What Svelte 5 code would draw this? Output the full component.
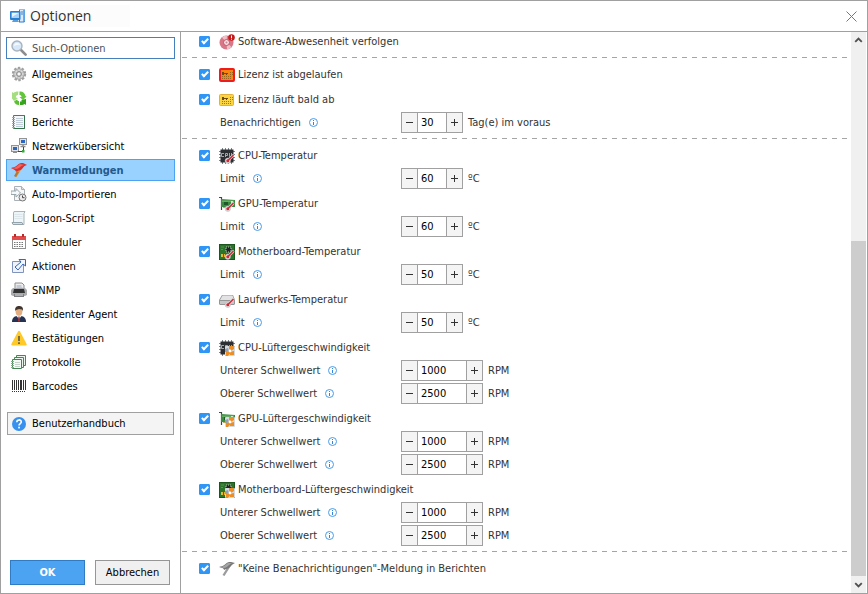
<script lang="ts">
  interface MenuItem {
    icon: string;
    label: string;
  }

  interface Field {
    label: string;
    value: number;
    step: number;
    unit: string;
  }

  interface Alert {
    icon: string;
    label: string;
    enabled: boolean;
    fields: Field[];
  }

  const menu: MenuItem[] = [
    { icon: 'gear', label: 'Allgemeines' },
    { icon: 'scanner', label: 'Scanner' },
    { icon: 'report', label: 'Berichte' },
    { icon: 'network', label: 'Netzwerkübersicht' },
    { icon: 'flag', label: 'Warnmeldungen' },
    { icon: 'import', label: 'Auto-Importieren' },
    { icon: 'script', label: 'Logon-Script' },
    { icon: 'calendar', label: 'Scheduler' },
    { icon: 'action', label: 'Aktionen' },
    { icon: 'printer', label: 'SNMP' },
    { icon: 'agent', label: 'Residenter Agent' },
    { icon: 'warning', label: 'Bestätigungen' },
    { icon: 'logs', label: 'Protokolle' },
    { icon: 'barcode', label: 'Barcodes' }
  ];

  function limit(value: number): Field[] {
    return [{ label: 'Limit', value, step: 1, unit: 'ºC' }];
  }

  function fanRange(): Field[] {
    return [
      { label: 'Unterer Schwellwert', value: 1000, step: 100, unit: 'RPM' },
      { label: 'Oberer Schwellwert', value: 2500, step: 100, unit: 'RPM' }
    ];
  }

  let selected = $state('Warnmeldungen');
  let search = $state('');

  let sections: Alert[][] = $state([
    [{ icon: 'disc', label: 'Software-Abwesenheit verfolgen', enabled: true, fields: [] }],
    [
      { icon: 'license-red', label: 'Lizenz ist abgelaufen', enabled: true, fields: [] },
      {
        icon: 'license-yellow',
        label: 'Lizenz läuft bald ab',
        enabled: true,
        fields: [{ label: 'Benachrichtigen', value: 30, step: 1, unit: 'Tag(e) im voraus' }]
      }
    ],
    [
      { icon: 'cpu-temp', label: 'CPU-Temperatur', enabled: true, fields: limit(60) },
      { icon: 'gpu-temp', label: 'GPU-Temperatur', enabled: true, fields: limit(60) },
      { icon: 'board-temp', label: 'Motherboard-Temperatur', enabled: true, fields: limit(50) },
      { icon: 'drive-temp', label: 'Laufwerks-Temperatur', enabled: true, fields: limit(50) },
      { icon: 'cpu-fan', label: 'CPU-Lüftergeschwindigkeit', enabled: true, fields: fanRange() },
      { icon: 'gpu-fan', label: 'GPU-Lüftergeschwindigkeit', enabled: true, fields: fanRange() },
      { icon: 'board-fan', label: 'Motherboard-Lüftergeschwindigkeit', enabled: true, fields: fanRange() }
    ],
    [{ icon: 'flag-gray', label: '"Keine Benachrichtigungen"-Meldung in Berichten', enabled: true, fields: [] }]
  ]);

  function change(field: Field, direction: number) {
    field.value = Math.max(0, field.value + direction * field.step);
  }
</script>

{#snippet icon(name: string)}
  <svg class="icon" viewBox="0 0 16 16" aria-hidden="true">
    {#if name === 'app'}
      <path d="M9 1.500h6v12l-1 1H9z" fill="#2a7fd0" />
      <path d="M10 2h3.500v11.500H10z" fill="#dceaf7" />
      <path d="M13.500 2H15v11l-1.500.5z" fill="#5ba4e6" />
      <path d="M11 4h2M11 6h2" stroke="#3f7fbd" />
      <rect x="0" y="3" width="10.500" height="9" rx="1" fill="#2880d4" />
      <rect x="1.500" y="4.500" width="7.500" height="5.500" fill="#a9d2f7" />
      <path d="M2 5h6.500L2 9z" fill="#eaf5ff" />
      <path d="M3 12h5l1 2H2z" fill="#5a9fdd" />
    {:else if name === 'search'}
      <path d="M10 10l4.600 4.600" stroke="#8d8d8d" stroke-width="2.600" stroke-linecap="round" />
      <circle cx="6" cy="6" r="5" fill="#d6e7fa" stroke="#aab3bd" stroke-width="1.400" />
      <path d="M3 6a3 3 0 013-3c2 0 3 1 3.500 2C7 4.500 5 5 3 6z" fill="#f7fbff" />
    {:else if name === 'gear'}
      <circle cx="8" cy="8" r="6.200" fill="none" stroke="#a0a0a0" stroke-width="2" stroke-dasharray="2.400 1.500" />
      <circle cx="8" cy="8" r="5.300" fill="#c4c4c4" stroke="#989898" stroke-width=".8" />
      <path d="M8 3.500v9M3.500 8h9M4.800 4.800l6.400 6.400M11.200 4.800l-6.400 6.400" stroke="#dcdcdc" stroke-width="1.300" />
      <circle cx="8" cy="8" r="2.400" fill="#dedede" stroke="#858585" />
      <circle cx="8" cy="8" r="1" fill="#fff" />
    {:else if name === 'scanner'}
      <path d="M1 2l1.500 1C4 1.800 5.500 1.300 7.500 1.500L7 5C5.500 5 4.800 6 4.800 7.500L7 8 3 11 1 8.500z" fill="#a4de80" />
      <path d="M3 11.500L6 9.500c.5 1 1 1.500 2 1.500v4c-2.500 0-4-1-5-3.500z" fill="#5cc036" />
      <path d="M8.500 1.500c3-.5 5.500 1.500 6 4.500l1 .5L12 10 8.500 7h2c0-1.500-1-2-2-2z" fill="#62c53c" />
      <path d="M15 9v6l-1.500-1c-1.200 1-2.500 1.200-4.500 1v-3.500c.8 0 1.500 0 2-.5l-1-1z" fill="#36a41c" />
    {:else if name === 'report'}
      <path d="M2.500 1.500h11v13h-11z" fill="#f4f8fb" stroke="#4c7b58" />
      <path d="M13.500 1.500v13h-10" fill="none" stroke="#34734a" />
      <path d="M5 4.500h7M5 6.500h7M5 8.500h7M5 10.500h7M5 12.500h7" stroke="#c1cdd9" />
      <path d="M1 3.500h3M1 5.500h3M1 7.500h3M1 9.500h3M1 11.500h3M1 13.500h3" stroke="#9aabb9" />
    {:else if name === 'network'}
      <rect x="8.500" y=".5" width="7" height="6" fill="#e4e4e4" stroke="#949494" />
      <rect x="10" y="2" width="4" height="3" fill="#2b67c4" />
      <path d="M12 7v1.500M9.500 8.500h5" stroke="#8e8e8e" stroke-width="1.400" />
      <rect x=".5" y="7.500" width="7" height="6" fill="#e4e4e4" stroke="#949494" />
      <rect x="2" y="9" width="4" height="3" fill="#2b67c4" />
      <path d="M2 14.500h4" stroke="#8e8e8e" />
      <path d="M7 13.500h5.500V9" fill="none" stroke="#444" />
      <rect x="11" y="12" width="2.500" height="2.500" fill="#38a83b" />
    {:else if name === 'flag'}
      <path d="M11 2l2 1-7.500 12-2-1z" fill="#d09a4e" />
      <path d="M0 6c2-1 4-.5 6-2.500S9 1 12 1l4 2c-2 .5-3 1-5 4-1.500 2-4 1-6 3 0-2-3-3-5-4z" fill="#dc2f2f" />
      <path d="M1 6c4 0 5-2 8-4l4 1C9 4 8 7 5 7z" fill="#ee6660" />
      <path d="M6 9l2 1-3 5-2-1z" fill="#b8782e" />
    {:else if name === 'flag-gray'}
      <path d="M11 2l2 1-7.500 12-2-1z" fill="#9b9b9b" />
      <path d="M0 6c2-1 4-.5 6-2.500S9 1 12 1l4 1c-2 1-3 1.500-5 4-1.500 2-4 1.500-6 3 0-2-3-2.500-5-3z" fill="#777" />
      <path d="M1 6c4 0 5-2 8-4l4 0C9 4 8 7 5 7z" fill="#a5a5a5" />
    {:else if name === 'import'}
      <path d="M3.500.5h7l3 3v11h-10z" fill="#f7f7f7" stroke="#a9b0b6" />
      <path d="M10.500.5v3h3" fill="#ddd" stroke="#a9b0b6" />
      <path d="M0 5h5V2.500L9.500 7 5 11V8.500H0z" fill="#f6f9fa" stroke="#98a6ad" />
      <circle cx="11.500" cy="11.500" r="3.500" fill="#ececec" stroke="#777" />
      <path d="M11.500 9.500v2.200h2" fill="none" stroke="#444" />
    {:else if name === 'script'}
      <path d="M3 1.500h11l-1 2v11H2.500V3z" fill="#eef5f8" stroke="#a6b4bb" />
      <path d="M3.500 4.500h8M3.500 6.500h8M3.500 8.500h8" stroke="#dce6eb" />
      <path d="M1 12.500h10l1 2H2z" fill="#d4e1e7" stroke="#94a3ab" />
    {:else if name === 'calendar'}
      <rect x="1.500" y="2.500" width="13" height="12" fill="#fff" stroke="#909090" />
      <path d="M1 2h14v4H1z" fill="#e14b4b" />
      <path d="M4 0v3M12 0v3" stroke="#b82c2c" stroke-width="2" />
      <path d="M3 8.500h10M3 10.500h10M3 12.500h10" stroke="#777" stroke-dasharray="1.500 1" />
    {:else if name === 'action'}
      <path d="M1.500 3.500h11v11h-11z" fill="#eef3fb" stroke="#7f93bd" />
      <path d="M8 1.500h6.500V8L12 6l-5 6-3-3 6-5z" fill="#f2f7ff" stroke="#3866bd" stroke-linejoin="round" />
    {:else if name === 'printer'}
      <path d="M4 1h7l2 2v5H4z" fill="#eee" stroke="#8c8c8c" />
      <path d="M5.500 4h5M5.500 6h6" stroke="#96a8bb" />
      <path d="M0 8l2-2h12l2 2v5l-2 1H2l-2-1z" fill="#a9abae" />
      <path d="M3 7h10l1 4H2z" fill="#333" />
      <path d="M3 12h10v3H3z" fill="#7e8083" />
      <path d="M4 13h8" stroke="#ddd" />
    {:else if name === 'agent'}
      <path d="M1 16c0-4 2-5.500 5-6h4c3 .5 5 2 5 6z" fill="#263252" />
      <path d="M5.500 10L8 13l2.500-3-1-2h-3z" fill="#f4f4f4" />
      <path d="M7.400 10.500h1.200L9 15l-1 1-1-1z" fill="#a13434" />
      <ellipse cx="8" cy="5.500" rx="3.400" ry="4.200" fill="#e2ad80" />
      <path d="M4.300 5C3.500 1 6 0 8 0s5 1 3.700 5L11 3.500 8 3 5 4z" fill="#40342b" />
    {:else if name === 'warning'}
      <path d="M7 1.500q1-1.500 2 0L15.600 14q.5 1.500-.8 1.500H1.200Q-.1 15.500.4 14z" fill="#ffc928" />
      <path d="M7.200 6h1.600v5H7.200zM7.200 12.200h1.600V14H7.200z" fill="#59564b" />
    {:else if name === 'logs'}
      <path d="M5.500 1.500h9v10h-9z" fill="#edf5ef" stroke="#458553" />
      <path d="M3.500 3.500h9v10h-9z" fill="#edf5ef" stroke="#458553" />
      <path d="M1.500 5.500h9v9h-9z" fill="#f5faf6" stroke="#458553" />
      <path d="M4 8.500h5M4 10.500h5M4 12.500h5" stroke="#c4d2ca" />
      <path d="M0 7.500h3M0 9.500h3M0 11.500h3M0 13.500h3" stroke="#91a99b" />
    {:else if name === 'barcode'}
      <path d="M1.500 2v10M3.500 2v10M5.500 2v10M7.500 2v10M12.500 2v10M14.500 2v10" stroke="#333" />
      <path d="M10 2v10" stroke="#333" stroke-width="2" />
      <path d="M1 13.500h14" stroke="#333" stroke-dasharray="1 1" />
    {:else if name === 'help'}
      <circle cx="8" cy="8" r="7" fill="#3790ee" />
      <path d="M5.800 6.200c0-3 4.500-3 4.500-.2C10.300 7.500 8 7.600 8 9.500" fill="none" stroke="#fff" stroke-width="1.600" />
      <rect x="7.200" y="10.700" width="1.700" height="1.700" fill="#fff" />
    {:else if name === 'disc'}
      <circle cx="7.500" cy="8.500" r="7" fill="#d77787" />
      <path d="M7.500 8.500L3 3.500A7 7 0 018 1.500zM7.500 8.500l5 4.500a7 7 0 01-4.500 2.500z" fill="#f0c0c7" />
      <circle cx="7.500" cy="8.500" r="3" fill="#f6dfe2" stroke="#c45366" />
      <circle cx="7.500" cy="8.500" r="1" fill="#c98791" />
      <circle cx="12.500" cy="3.500" r="3.300" fill="#c61a1a" />
      <path d="M12.500 1.500v2.500M12.500 4.700v1" stroke="#fff" />
    {:else if name === 'license-red' || name === 'license-yellow'}
      {@const red = name === 'license-red'}
      <rect x={red ? 1 : 0.5} y={red ? 2 : 2.5} width="14" height={red ? 12 : 11} rx="1" fill={red ? '#f9850f' : '#fbd541'} stroke={red ? '#ee1c1c' : '#e3b13a'} stroke-width={red ? 2 : 1} />
      <path d="M3 5h2v1h4v1H8v1H7V7H5v1H3z" fill="#6b4a16" />
      <path d="M11 5.500h3M11 7.500h3M3 9.500h10M3 11.500h10" stroke="#84601e" stroke-width=".8" stroke-dasharray="1 1" />
    {:else if name === 'drive-temp'}
      <path d="M3 3h11l2 5v4l-1 1H1l-1-1V8z" fill="#969696" />
      <path d="M3.500 3.500h10L15 8H1z" fill="#e3e3e3" />
      <path d="M1 9h14v3H1z" fill="#c6c6c6" />
    {:else if name.startsWith('cpu')}
      <path d="M3.500 0v16M6.500 0v16M9.500 0v16M12.500 0v16M0 3.500h16M0 6.500h16M0 9.500h16M0 12.500h16" stroke="#7c848c" />
      <rect x="1.500" y="1.500" width="13" height="13" fill="#2d3033" />
      <path d="M5 5.500H2.500v3H5M6.500 9V5.500h2v2h-2M10.500 5v3.500h2V5" fill="none" stroke="#c5c5c5" stroke-width=".8" />
    {:else if name.startsWith('gpu')}
      <path d="M0 1.500h2.500V14" fill="none" stroke="#3d4a3f" stroke-width="1.200" />
      <path d="M2 3l14 1v7H2z" fill="#3a8c40" />
      <path d="M3 4.500h12v1.500H3z" fill="#66ae65" />
      <path d="M4 11.500h7" stroke="#c9a94a" />
      <rect x="5" y="6" width="4" height="3" fill="#1e5729" />
      <path d="M12 5h2v3h-2z" fill="#d9e5d3" />
    {:else if name.startsWith('board')}
      <rect x=".5" y=".5" width="15" height="15" fill="#2a752b" stroke="#1b561d" />
      <rect x="7" y="3" width="5" height="5" fill="#1d2621" stroke="#bfc8ba" stroke-dasharray="1 1" />
      <path d="M2 10h2v3H2zM5 10h1v3H5z" fill="#e3ba32" />
      <path d="M2 3h3M2 5.500h2" stroke="#57954d" />
    {/if}
    {#if name.endsWith('-temp')}
      <path d="M14 7.500L9.500 12" stroke="#d8d8d8" stroke-width="2.600" stroke-linecap="round" />
      <circle cx="8.800" cy="12.800" r="2.700" fill="#e2e2e2" stroke="#b0b0b0" stroke-width=".5" />
      <path d="M14.500 7L9 12.500" stroke="#d62533" stroke-width="1.400" />
      <circle cx="8.800" cy="12.800" r="1.500" fill="#d62533" />
    {:else if name.endsWith('-fan')}
      <rect x="6" y="6" width="10" height="10" rx="1" fill="#d5dade" />
      <path d="M10 6h5v3l-3 2-2-2zM15 11v4h-4l-1-3zM7 12l3-1 1 2-2 3H7z" fill="#ee8d22" />
      <path d="M6 9l3-1 1 3-2 1H6z" fill="#93a2b2" />
      <circle cx="11" cy="11" r="1.400" fill="#fff" />
    {/if}
  </svg>
{/snippet}

<div class="window">
  <header class="titlebar">
    {@render icon('app')}
    <h1>Optionen</h1>
    <button class="close" aria-label="Schließen">
      <svg viewBox="0 0 11 11" aria-hidden="true"><path d="M.5.5l10 10M10.500.5l-10 10" stroke="#777" fill="none" /></svg>
    </button>
  </header>

  <div class="body">
    <aside class="sidebar">
      <label class="search">
        {@render icon('search')}
        <input type="text" placeholder="Such-Optionen" aria-label="Such-Optionen" bind:value={search} />
      </label>

      <nav class="menu">
        {#each menu as item (item.label)}
          <button class="menu-item" class:selected={selected === item.label} onclick={() => (selected = item.label)}>
            {@render icon(item.icon)}
            <span class="caption">{item.label}</span>
          </button>
        {/each}
      </nav>

      <button class="manual">
        {@render icon('help')}
        <span class="caption">Benutzerhandbuch</span>
      </button>

      <div class="actions">
        <button class="action primary">OK</button>
        <button class="action">Abbrechen</button>
      </div>
    </aside>

    <main class="content">
      {#each sections as section, s}
        <section>
          {#each section as alert, a}
            <div class="alert">
              <label class="alert-head">
                <input type="checkbox" bind:checked={alert.enabled} />
                {@render icon(alert.icon)}
                <span class="caption">{alert.label}</span>
              </label>
              {#each alert.fields as field, f}
                <div class="field">
                  <div class="field-label">
                    <label for="field-{s}-{a}-{f}">{field.label}</label>
                    <svg class="info" viewBox="0 0 9 9" aria-hidden="true">
                      <circle cx="4.500" cy="4.500" r="4" fill="#fff" stroke="#4a9be8" />
                      <path d="M4.500 2v1M4.500 4v3" stroke="#2f86dc" />
                    </svg>
                  </div>
                  <div class="spinner" class:wide={field.unit === 'RPM'}>
                    <button aria-label="Verringern" onclick={() => change(field, -1)}>
                      <svg viewBox="0 0 7 7" aria-hidden="true"><path d="M0 3.500h7" stroke="#333" /></svg>
                    </button>
                    <input id="field-{s}-{a}-{f}" type="text" inputmode="numeric" bind:value={field.value} />
                    <button aria-label="Erhöhen" onclick={() => change(field, 1)}>
                      <svg viewBox="0 0 7 7" aria-hidden="true"><path d="M0 3.500h7M3.500 0v7" stroke="#333" /></svg>
                    </button>
                  </div>
                  <span>{field.unit}</span>
                </div>
              {/each}
            </div>
          {/each}
        </section>
      {/each}
    </main>

    <div class="scrollbar" aria-hidden="true">
      <svg viewBox="0 0 16 16"><path d="M4.500 9.500L8 6l3.500 3.500" fill="none" stroke="#505050" stroke-width="2" /></svg>
      <div class="track">
        <div class="thumb"></div>
      </div>
      <svg viewBox="0 0 16 16"><path d="M4.500 6.500L8 10l3.500-3.500" fill="none" stroke="#505050" stroke-width="2" /></svg>
    </div>
  </div>
</div>

<style>
  :global(body) {
    margin: 0;
  }

  .window {
    display: flex;
    flex-direction: column;
    height: 100vh;
    box-sizing: border-box;
    border: 1px solid #a0a0a0;
    background: #fff;
    color: #333;
    font-family: Tahoma, 'DejaVu Sans Condensed', 'Noto Sans', sans-serif;
    font-size: 11px;
    line-height: 16px;
  }

  button,
  input {
    box-sizing: border-box;
    margin: 0;
    padding: 0;
    border: none;
    border-radius: 0;
    background: none;
    color: inherit;
    font: inherit;
  }

  .icon {
    flex: none;
    width: 16px;
    height: 16px;
  }

  .caption {
    padding-top: 1px;
  }

  .titlebar {
    display: flex;
    align-items: center;
    height: 30px;
    padding: 0 10px 0 9px;
    border-bottom: 1px solid #a0a0a0;
  }

  .titlebar h1 {
    width: 100px;
    margin: 0 auto 0 4px;
    background: #fcfcfc;
    font-family: Tahoma, 'Open Sans', sans-serif;
    font-size: 14px;
    font-weight: 400;
    line-height: 22px;
  }

  .close svg {
    display: block;
    width: 11px;
    height: 11px;
  }

  .body {
    display: flex;
    flex: 1;
    min-height: 0;
  }

  .sidebar {
    display: flex;
    flex-direction: column;
    width: 180px;
    padding: 5px 5px 8px;
    box-sizing: border-box;
    border-right: 1px solid #a0a0a0;
    color: #000;
  }

  .search {
    display: flex;
    align-items: center;
    gap: 5px;
    height: 22px;
    margin-bottom: 4px;
    padding: 0 4px;
    box-sizing: border-box;
    border: 1px solid #4580bd;
  }

  .search input {
    flex: 1;
    min-width: 0;
    padding-top: 1px;
    outline: none;
  }

  .search input::placeholder {
    color: #4a5160;
    opacity: 1;
  }

  .menu {
    display: flex;
    flex-direction: column;
    gap: 2px;
  }

  .menu-item {
    display: flex;
    align-items: center;
    gap: 5px;
    height: 22px;
    padding: 0 4px;
    border: 1px solid transparent;
    text-align: left;
  }

  .menu-item.selected {
    border-color: #4ba3f2;
    background: #99d1ff;
    color: #235a8c;
    font-weight: 700;
  }

  .manual {
    display: flex;
    align-items: center;
    gap: 5px;
    height: 23px;
    margin: 15px 1px auto;
    padding: 0 3px;
    border: 1px solid #a0a0a0;
    background: #f4f4f4;
  }

  .actions {
    display: flex;
    gap: 10px;
    padding: 0 5px 0 4px;
  }

  .action {
    flex: 1;
    height: 25px;
    padding-top: 1px;
    border: 1px solid #969696;
    background: #f0f0f0;
  }

  .action.primary {
    border-color: #2f7cc4;
    background: #4ba3f2;
    color: #fff;
    font-weight: 700;
  }

  /* scrolled to the end of the list */
  .content {
    display: flex;
    flex: 1;
    flex-direction: column;
    justify-content: flex-end;
    min-width: 0;
    padding: 0 4px 13px 1px;
    overflow: hidden;
  }

  section + section::before {
    content: '';
    display: block;
    height: 1px;
    margin: 4px 0 3px;
    background: repeating-linear-gradient(90deg, #a5a5a5 0 5px, transparent 5px 10px);
  }

  .alert {
    padding: 2px 0 0 17px;
  }

  .alert-head {
    display: flex;
    align-items: center;
    width: fit-content;
    height: 23px;
  }

  .alert-head input {
    display: grid;
    place-items: center;
    width: 11px;
    height: 11px;
    margin-right: 9px;
    appearance: none;
    border: 1px solid #a0a0a0;
    border-radius: 1px;
  }

  .alert-head input:checked {
    border-color: #3096f6;
    background: #3096f6;
  }

  .alert-head input:checked::after {
    content: '';
    width: 4px;
    height: 7px;
    margin-bottom: 2px;
    box-sizing: border-box;
    border: solid #fff;
    border-width: 0 2px 2px 0;
    transform: rotate(45deg);
  }

  .alert-head .caption {
    margin-left: 3px;
  }

  .field {
    display: flex;
    align-items: center;
    height: 23px;
    padding-left: 21px;
  }

  .field-label {
    display: flex;
    align-items: center;
    gap: 8px;
    width: 181px;
  }

  .info {
    width: 9px;
    height: 9px;
  }

  .spinner {
    display: flex;
    width: 62px;
    height: 21px;
    margin-right: 5px;
    box-sizing: border-box;
    border: 1px solid #a0a0a0;
  }

  .spinner.wide {
    width: 82px;
  }

  .spinner button {
    display: grid;
    flex: none;
    place-items: center;
    width: 15px;
    background: #f4f4f4;
  }

  .spinner svg {
    width: 7px;
    height: 7px;
  }

  .spinner input {
    flex: 1;
    min-width: 0;
    padding: 0 3px;
    border: solid #a0a0a0;
    border-width: 0 1px;
    color: #000;
  }

  .scrollbar {
    display: flex;
    flex-direction: column;
    width: 15px;
    margin-right: 1px;
    background: #f0f0f0;
  }

  .scrollbar svg {
    flex: none;
    height: 17px;
  }

  .track {
    display: flex;
    flex: 1;
    flex-direction: column;
    justify-content: flex-end;
  }

  .thumb {
    height: 335px;
    background: #cdcdcd;
  }
</style>
